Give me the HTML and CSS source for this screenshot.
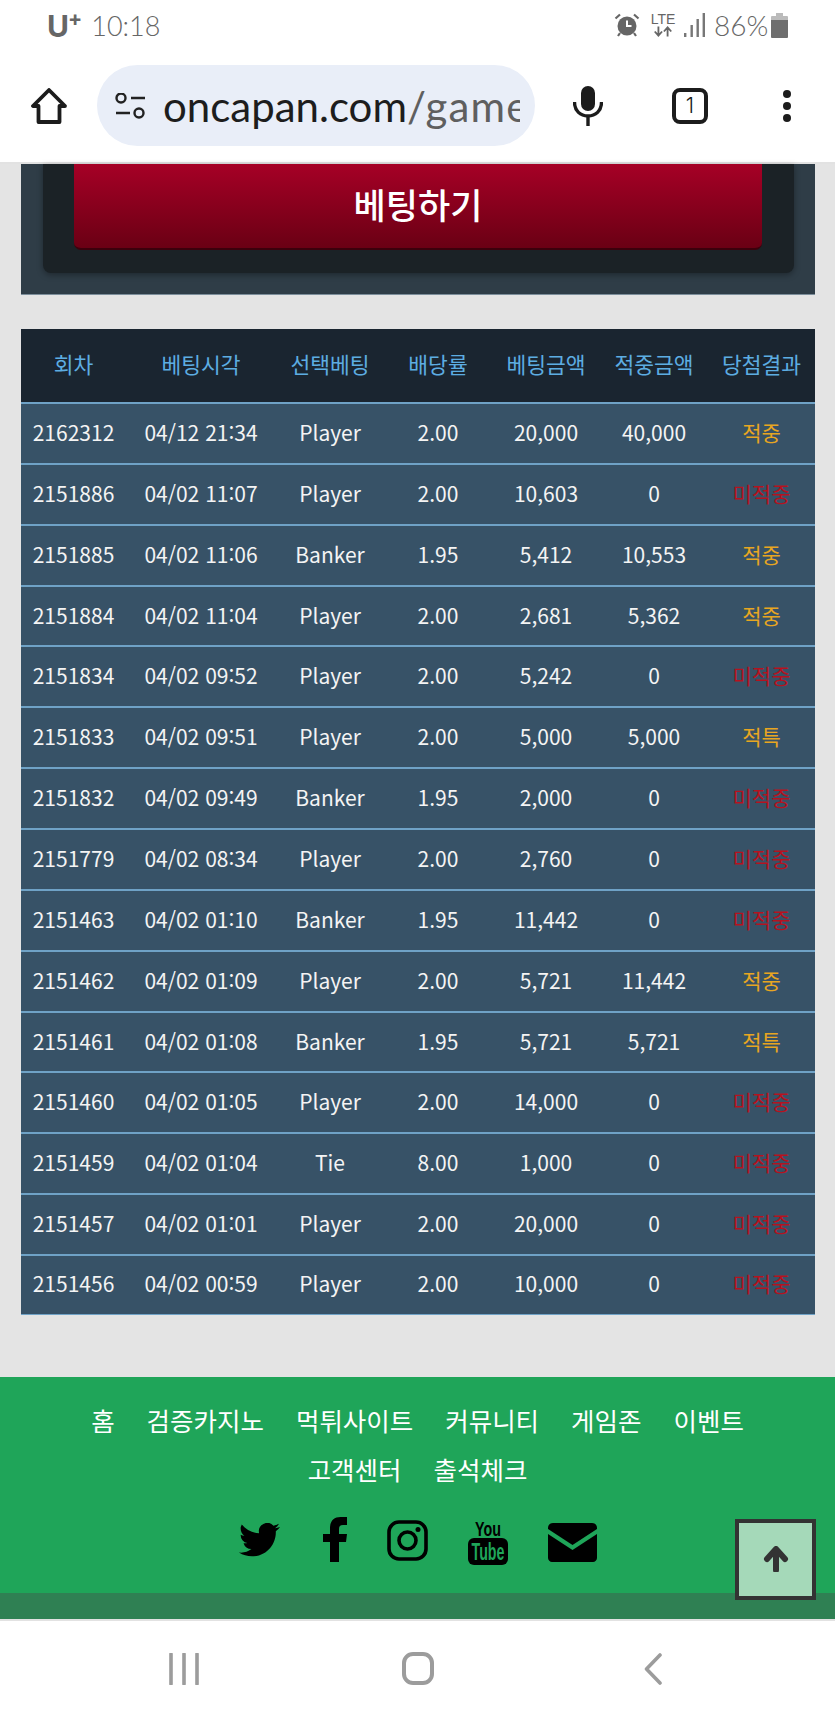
FILE: index.html
```html
<!DOCTYPE html>
<html lang="ko">
<head>
    <meta charset="UTF-8">
    <meta name="viewport" content="width=device-width, initial-scale=1.0">
    <title>oncapan.com</title>
    <link rel="stylesheet" href="styles.css">
</head>
<body>
<div class="phone">
    <header class="chrome">
        <div class="status">
            <div class="status-left">
                <span class="carrier">U<sup>+</sup></span>
                <span class="clock">10:18</span>
            </div>
            <div class="status-right">
                <svg class="ic-alarm" viewBox="0 0 26 24"><circle cx="13" cy="13" r="9.500" fill="#666"/><path d="M13 7.500V13h4.500" fill="none" stroke="#fff" stroke-width="2"/><path d="M1.500 5.500 6 1.500M24.500 5.500 20 1.500M6 20l-2 3M20 20l2 3" stroke="#666" stroke-width="2.200" fill="none"/></svg>
                <span class="lte">LTE<svg viewBox="0 0 24 11"><path d="M7 0v9M3 5.500 7 10l4-4.500M17 11V2M13 5.500 17 1l4 4.500" fill="none" stroke="#666" stroke-width="2"/></svg></span>
                <svg class="ic-signal" viewBox="0 0 22 24"><path d="M1 24v-4h2.400v4zM7.500 24V12h2.400v12zM13.500 24V6h2.400v18zM19.600 24V0H22v24z" fill="#777"/></svg>
                <span class="battery-text">86%</span>
                <svg class="ic-battery" viewBox="0 0 17 25"><path d="M5 0h7v3H5z" fill="#bbb"/><path d="M1 3h15a1 1 0 0 1 1 1v3H0V4a1 1 0 0 1 1-1z" fill="#bbb"/><path d="M0 7h17v17a1 1 0 0 1-1 1H1a1 1 0 0 1-1-1z" fill="#6e6e6e"/></svg>
            </div>
        </div>
        <div class="toolbar">
            <svg class="ic-home" viewBox="0 0 36 36"><path d="M18 2 2 18h5.500v16h21V18H34z" fill="none" stroke="#1c1c1c" stroke-width="3.800" stroke-linejoin="round"/></svg>
            <div class="omnibox">
                <svg class="ic-tune" viewBox="0 0 30 26"><circle cx="6" cy="5" r="4.500" fill="none" stroke="#222" stroke-width="2.400"/><path d="M16 5h14M1 20h14" stroke="#222" stroke-width="2.600"/><circle cx="24" cy="20" r="4.500" fill="none" stroke="#222" stroke-width="2.400"/></svg>
                <div class="url"><span class="url-host">oncapan.com</span><span class="url-path">/game</span></div>
            </div>
            <svg class="ic-mic" viewBox="0 0 30 40"><rect x="8" y="0" width="14" height="25" rx="7" fill="#1c1c1c"/><path d="M1.500 16c0 9 6 14 13.500 14s13.500-5 13.500-14M15 30v10" fill="none" stroke="#1c1c1c" stroke-width="3.400"/></svg>
            <div class="tabs">1</div>
            <div class="dots"><i></i><i></i><i></i></div>
        </div>
    </header>

    <main class="content">
        <section class="bet-panel">
            <div class="bet-inner">
                <button class="bet-btn">베팅하기</button>
            </div>
        </section>

        <table class="history">
            <thead>
                <tr>
                    <th class="c1">회차</th>
                    <th class="c2">베팅시각</th>
                    <th class="c3">선택베팅</th>
                    <th class="c3">배당률</th>
                    <th class="c3">베팅금액</th>
                    <th class="c3">적중금액</th>
                    <th class="c7">당첨결과</th>
                </tr>
            </thead>
            <tbody>
                <tr><td>2162312</td><td>04/12 21:34</td><td>Player</td><td>2.00</td><td>20,000</td><td>40,000</td><td class="win">적중</td></tr>
                <tr><td>2151886</td><td>04/02 11:07</td><td>Player</td><td>2.00</td><td>10,603</td><td>0</td><td class="lose">미적중</td></tr>
                <tr><td>2151885</td><td>04/02 11:06</td><td>Banker</td><td>1.95</td><td>5,412</td><td>10,553</td><td class="win">적중</td></tr>
                <tr><td>2151884</td><td>04/02 11:04</td><td>Player</td><td>2.00</td><td>2,681</td><td>5,362</td><td class="win">적중</td></tr>
                <tr><td>2151834</td><td>04/02 09:52</td><td>Player</td><td>2.00</td><td>5,242</td><td>0</td><td class="lose">미적중</td></tr>
                <tr><td>2151833</td><td>04/02 09:51</td><td>Player</td><td>2.00</td><td>5,000</td><td>5,000</td><td class="win">적특</td></tr>
                <tr><td>2151832</td><td>04/02 09:49</td><td>Banker</td><td>1.95</td><td>2,000</td><td>0</td><td class="lose">미적중</td></tr>
                <tr><td>2151779</td><td>04/02 08:34</td><td>Player</td><td>2.00</td><td>2,760</td><td>0</td><td class="lose">미적중</td></tr>
                <tr><td>2151463</td><td>04/02 01:10</td><td>Banker</td><td>1.95</td><td>11,442</td><td>0</td><td class="lose">미적중</td></tr>
                <tr><td>2151462</td><td>04/02 01:09</td><td>Player</td><td>2.00</td><td>5,721</td><td>11,442</td><td class="win">적중</td></tr>
                <tr><td>2151461</td><td>04/02 01:08</td><td>Banker</td><td>1.95</td><td>5,721</td><td>5,721</td><td class="win">적특</td></tr>
                <tr><td>2151460</td><td>04/02 01:05</td><td>Player</td><td>2.00</td><td>14,000</td><td>0</td><td class="lose">미적중</td></tr>
                <tr><td>2151459</td><td>04/02 01:04</td><td>Tie</td><td>8.00</td><td>1,000</td><td>0</td><td class="lose">미적중</td></tr>
                <tr><td>2151457</td><td>04/02 01:01</td><td>Player</td><td>2.00</td><td>20,000</td><td>0</td><td class="lose">미적중</td></tr>
                <tr><td>2151456</td><td>04/02 00:59</td><td>Player</td><td>2.00</td><td>10,000</td><td>0</td><td class="lose">미적중</td></tr>
            </tbody>
        </table>
    </main>

    <footer class="site-footer">
        <div class="footer-main">
            <nav class="foot-links">
                <a>홈</a><a>검증카지노</a><a>먹튀사이트</a><a>커뮤니티</a><a>게임존</a><a>이벤트</a><a>고객센터</a><a>출석체크</a>
            </nav>
            <div class="socials">
                <svg class="ic-tw" viewBox="0 0 24 20"><path transform="translate(0 -2.500)" d="M23.953 4.570a10 10 0 0 1-2.825.775 4.958 4.958 0 0 0 2.163-2.723c-.951.555-2.005.959-3.127 1.184a4.920 4.920 0 0 0-8.384 4.482C7.690 8.095 4.067 6.130 1.640 3.162a4.822 4.822 0 0 0-.666 2.475c0 1.710.870 3.213 2.188 4.096a4.904 4.904 0 0 1-2.228-.616v.060a4.923 4.923 0 0 0 3.946 4.827 4.996 4.996 0 0 1-2.212.085 4.936 4.936 0 0 0 4.604 3.417 9.867 9.867 0 0 1-6.102 2.105c-.390 0-.779-.023-1.170-.067a13.995 13.995 0 0 0 7.557 2.209c9.053 0 13.998-7.496 13.998-13.985 0-.210 0-.420-.015-.630A9.935 9.935 0 0 0 24 4.590z" fill="#000"/></svg>
                <svg class="ic-fb" viewBox="0 0 24 45"><path d="M7 45V25H0v-8h7v-6C7 4 11 0 17.500 0H24v8h-4c-3 0-4 1.500-4 4v5h8l-1 8h-7v20z" fill="#000"/></svg>
                <svg class="ic-ig" viewBox="0 0 41 41"><rect x="2" y="2" width="37" height="37" rx="10" fill="none" stroke="#000" stroke-width="3.600"/><circle cx="20.500" cy="20.500" r="8.500" fill="none" stroke="#000" stroke-width="3.600"/><circle cx="31" cy="9.500" r="2.500" fill="#000"/></svg>
                <svg class="ic-yt" viewBox="0 0 40 48"><text x="20" y="19" class="yt-you" textLength="26" lengthAdjust="spacingAndGlyphs">You</text><rect x="0" y="21" width="40" height="27" rx="6" fill="#000"/><text x="20" y="43" class="yt-tube" textLength="33" lengthAdjust="spacingAndGlyphs">Tube</text></svg>
                <svg class="ic-mail" viewBox="0 0 49 39"><path d="M5 0h39c3 0 5 2 5 5v1L24.500 22 0 6V5c0-3 2-5 5-5z" fill="#000"/><path d="M0 11l24.500 16L49 11v24c0 2-2 4-4 4H4c-2 0-4-2-4-4z" fill="#000"/></svg>
            </div>
        </div>
        <div class="footer-strip"></div>
        <div class="to-top">
            <svg viewBox="0 0 28 26"><path d="M14 24V4M5 13l9-10 9 10" fill="none" stroke="#333" stroke-width="6" stroke-linecap="round" stroke-linejoin="round"/></svg>
        </div>
    </footer>

    <div class="navbar">
        <svg class="ic-recent" viewBox="0 0 30 32"><path d="M2 1v30M15 1v30M28 1v30" stroke="#9c9c9c" stroke-width="3.600" stroke-linecap="round"/></svg>
        <svg class="ic-square" viewBox="0 0 32 33"><rect x="2" y="2" width="28" height="29" rx="9" fill="none" stroke="#9c9c9c" stroke-width="4"/></svg>
        <svg class="ic-back" viewBox="0 0 18 32"><path d="M16 2 2.500 16 16 30" fill="none" stroke="#9c9c9c" stroke-width="3.600" stroke-linecap="round" stroke-linejoin="round"/></svg>
    </div>
</div>
</body>
</html>
```

FILE: styles.css
```css
* {
    box-sizing: border-box;
}

body {
    margin: 0;
    padding: 0;
    background-color: #fff;
    font-family: "Noto Sans CJK KR", "Noto Sans", sans-serif;
}

.phone {
    position: relative;
    width: 835px;
    height: 1717px;
    overflow: hidden;
    display: flex;
    flex-direction: column;
    background-color: #e4e4e4;
}

/* browser chrome */
.chrome {
    height: 164px;
    background-color: #fff;
    border-bottom: 2px solid #e2e2e2;
}

.status {
    height: 52px;
    padding: 11px 47px 0 47px;
    display: flex;
    justify-content: space-between;
    align-items: flex-start;
    color: #666;
}

.status-left {
    display: flex;
    align-items: center;
    gap: 9px;
}

.carrier {
    font-family: "Inter", sans-serif;
    font-weight: 700;
    font-size: 30px;
    line-height: 30px;
}

.carrier sup {
    font-size: 21px;
    line-height: 0;
    vertical-align: 11px;
    margin-left: -1px;
}

.clock {
    font-family: "Lato", sans-serif;
    font-weight: 300;
    font-size: 27px;
    line-height: 30px;
    color: #666;
}

.status-right {
    display: flex;
    align-items: center;
    height: 28px;
}

.ic-alarm {
    width: 26px;
    height: 24px;
    margin-right: 11px;
}

.lte {
    width: 24px;
    display: flex;
    flex-direction: column;
    align-items: center;
    font-family: "Liberation Sans", sans-serif;
    font-size: 14px;
    line-height: 13px;
    color: #666;
    margin-right: 8px;
}

.lte svg {
    width: 22px;
    height: 11px;
}

.ic-signal {
    width: 22px;
    height: 24px;
    margin-right: 9px;
}

.battery-text {
    font-family: "Lato", sans-serif;
    font-weight: 300;
    font-size: 28px;
    line-height: 30px;
    color: #666;
    width: 57px;
}

.ic-battery {
    width: 17px;
    height: 25px;
}

.toolbar {
    height: 110px;
    padding: 13px 0 0 31px;
    display: flex;
    align-items: flex-start;
}

.ic-home {
    width: 36px;
    height: 36px;
    margin: 23px 30px 0 0;
}

.omnibox {
    width: 438px;
    height: 81px;
    border-radius: 41px;
    background-color: #e9eef8;
    padding: 0 15px 0 18px;
    display: flex;
    align-items: center;
}

.ic-tune {
    flex: none;
    width: 30px;
    height: 26px;
    margin-right: 18px;
}

.url {
    font-family: "Lato", sans-serif;
    font-size: 42px;
    white-space: nowrap;
    overflow: hidden;
    line-height: 60px;
}

.url-host {
    color: #1d1d1d;
}

.url-path {
    color: #5f5f5f;
    letter-spacing: 1.200px;
}

.ic-mic {
    width: 30px;
    height: 40px;
    margin: 21px 0 0 38px;
}

.tabs {
    width: 36px;
    height: 36px;
    margin: 23px 0 0 69px;
    border: 4px solid #1c1c1c;
    border-radius: 8px;
    font-family: "Inter", sans-serif;
    font-size: 21px;
    line-height: 27px;
    font-weight: 300;
    text-align: center;
    color: #1c1c1c;
}

.dots {
    margin: 25px 0 0 75px;
    display: flex;
    flex-direction: column;
    gap: 4px;
}

.dots i {
    display: block;
    width: 8px;
    height: 8px;
    border-radius: 50%;
    background-color: #1c1c1c;
}

/* page */
.content {
    padding: 0 20px 0 21px;
}

.bet-panel {
    height: 131px;
    padding: 0 21px 21px 22px;
    background-color: #2f3d47;
    border-bottom: 1px solid #7c8e9b;
}

.bet-inner {
    height: 109px;
    padding: 0 32px 0 31px;
    background-color: #1b2226;
    border-radius: 0 0 8px 8px;
    box-shadow: 0 2px 6px rgba(0, 0, 0, 0.35);
}

.bet-btn {
    display: block;
    width: 100%;
    height: 86px;
    border: none;
    border-bottom: 2px solid #3c000c;
    border-radius: 0 0 7px 7px;
    background: linear-gradient(to bottom, #a60026, #6a0014);
    color: #fff;
    font-family: "Noto Sans CJK KR", sans-serif;
    font-size: 35px;
    font-weight: 500;
    padding: 0 0 6px 0;
}

.history {
    width: 794px;
    margin-top: 34px;
    table-layout: fixed;
    border-collapse: separate;
    border-spacing: 0;
    background-color: #375267;
    font-size: 21px;
}

.history th {
    height: 73px;
    background-color: #1a2530;
    color: #5dade2;
    font-size: 21.500px;
    font-weight: 400;
    padding: 0 0 4px 0;
    text-align: center;
}

.history td {
    height: 60.870px;
    padding: 0 0 3px 0;
    border-top: 2px solid #6fa2c6;
    color: #f4f4f4;
    text-align: center;
    white-space: nowrap;
}

.history tr:last-child td {
    border-bottom: 1px solid #6fa2c6;
}

.c1 {
    width: 105px;
}

.c2 {
    width: 150px;
}

.c3 {
    width: 108px;
}

.c7 {
    width: 107px;
}

.history td.win {
    color: #e8a621;
}

.history td.lose {
    color: #b5121f;
}

/* footer */
.site-footer {
    position: relative;
    margin-top: 62px;
    border-bottom: 2px solid #e2e2e2;
}

.footer-main {
    height: 216px;
    padding-top: 18px;
    background-color: #1fa559;
}

.foot-links {
    display: flex;
    flex-wrap: wrap;
    justify-content: center;
    gap: 0 32px;
    padding: 0 85px;
}

.foot-links a {
    color: #fff;
    font-size: 25.500px;
    line-height: 49px;
}

.socials {
    display: flex;
    justify-content: center;
    align-items: flex-start;
    gap: 40px;
    margin-top: 24px;
}

.socials svg {
    display: block;
}

.ic-tw {
    width: 41px;
    height: 35px;
    margin-top: 6px;
    margin-right: 3px;
}

.ic-fb {
    width: 24px;
    height: 45px;
}

.ic-ig {
    width: 41px;
    height: 41px;
    margin-top: 3px;
}

.ic-yt {
    width: 40px;
    height: 48px;
}

.ic-mail {
    width: 49px;
    height: 39px;
    margin-top: 6px;
}

.yt-you,
.yt-tube {
    font-family: "Liberation Sans", sans-serif;
    font-weight: 700;
    text-anchor: middle;
}

.yt-you {
    font-size: 21px;
    fill: #000;
}

.yt-tube {
    font-size: 24px;
    fill: #1fa559;
}

.footer-strip {
    height: 26px;
    background-color: #2f8053;
}

.to-top {
    position: absolute;
    right: 19px;
    top: 142px;
    width: 81px;
    height: 81px;
    padding-top: 23px;
    background-color: #a5d9b9;
    border: 4px solid #333;
    text-align: center;
}

.to-top svg {
    width: 28px;
    height: 26px;
}

/* android nav */
.navbar {
    flex: 1;
    background-color: #fff;
    display: grid;
    grid-template-columns: 169px 30px 203px 32px 210px 18px;
    align-items: center;
}

.ic-recent {
    grid-column: 2;
    width: 30px;
    height: 32px;
}

.ic-square {
    grid-column: 4;
    width: 32px;
    height: 33px;
}

.ic-back {
    grid-column: 6;
    width: 18px;
    height: 32px;
}
```
